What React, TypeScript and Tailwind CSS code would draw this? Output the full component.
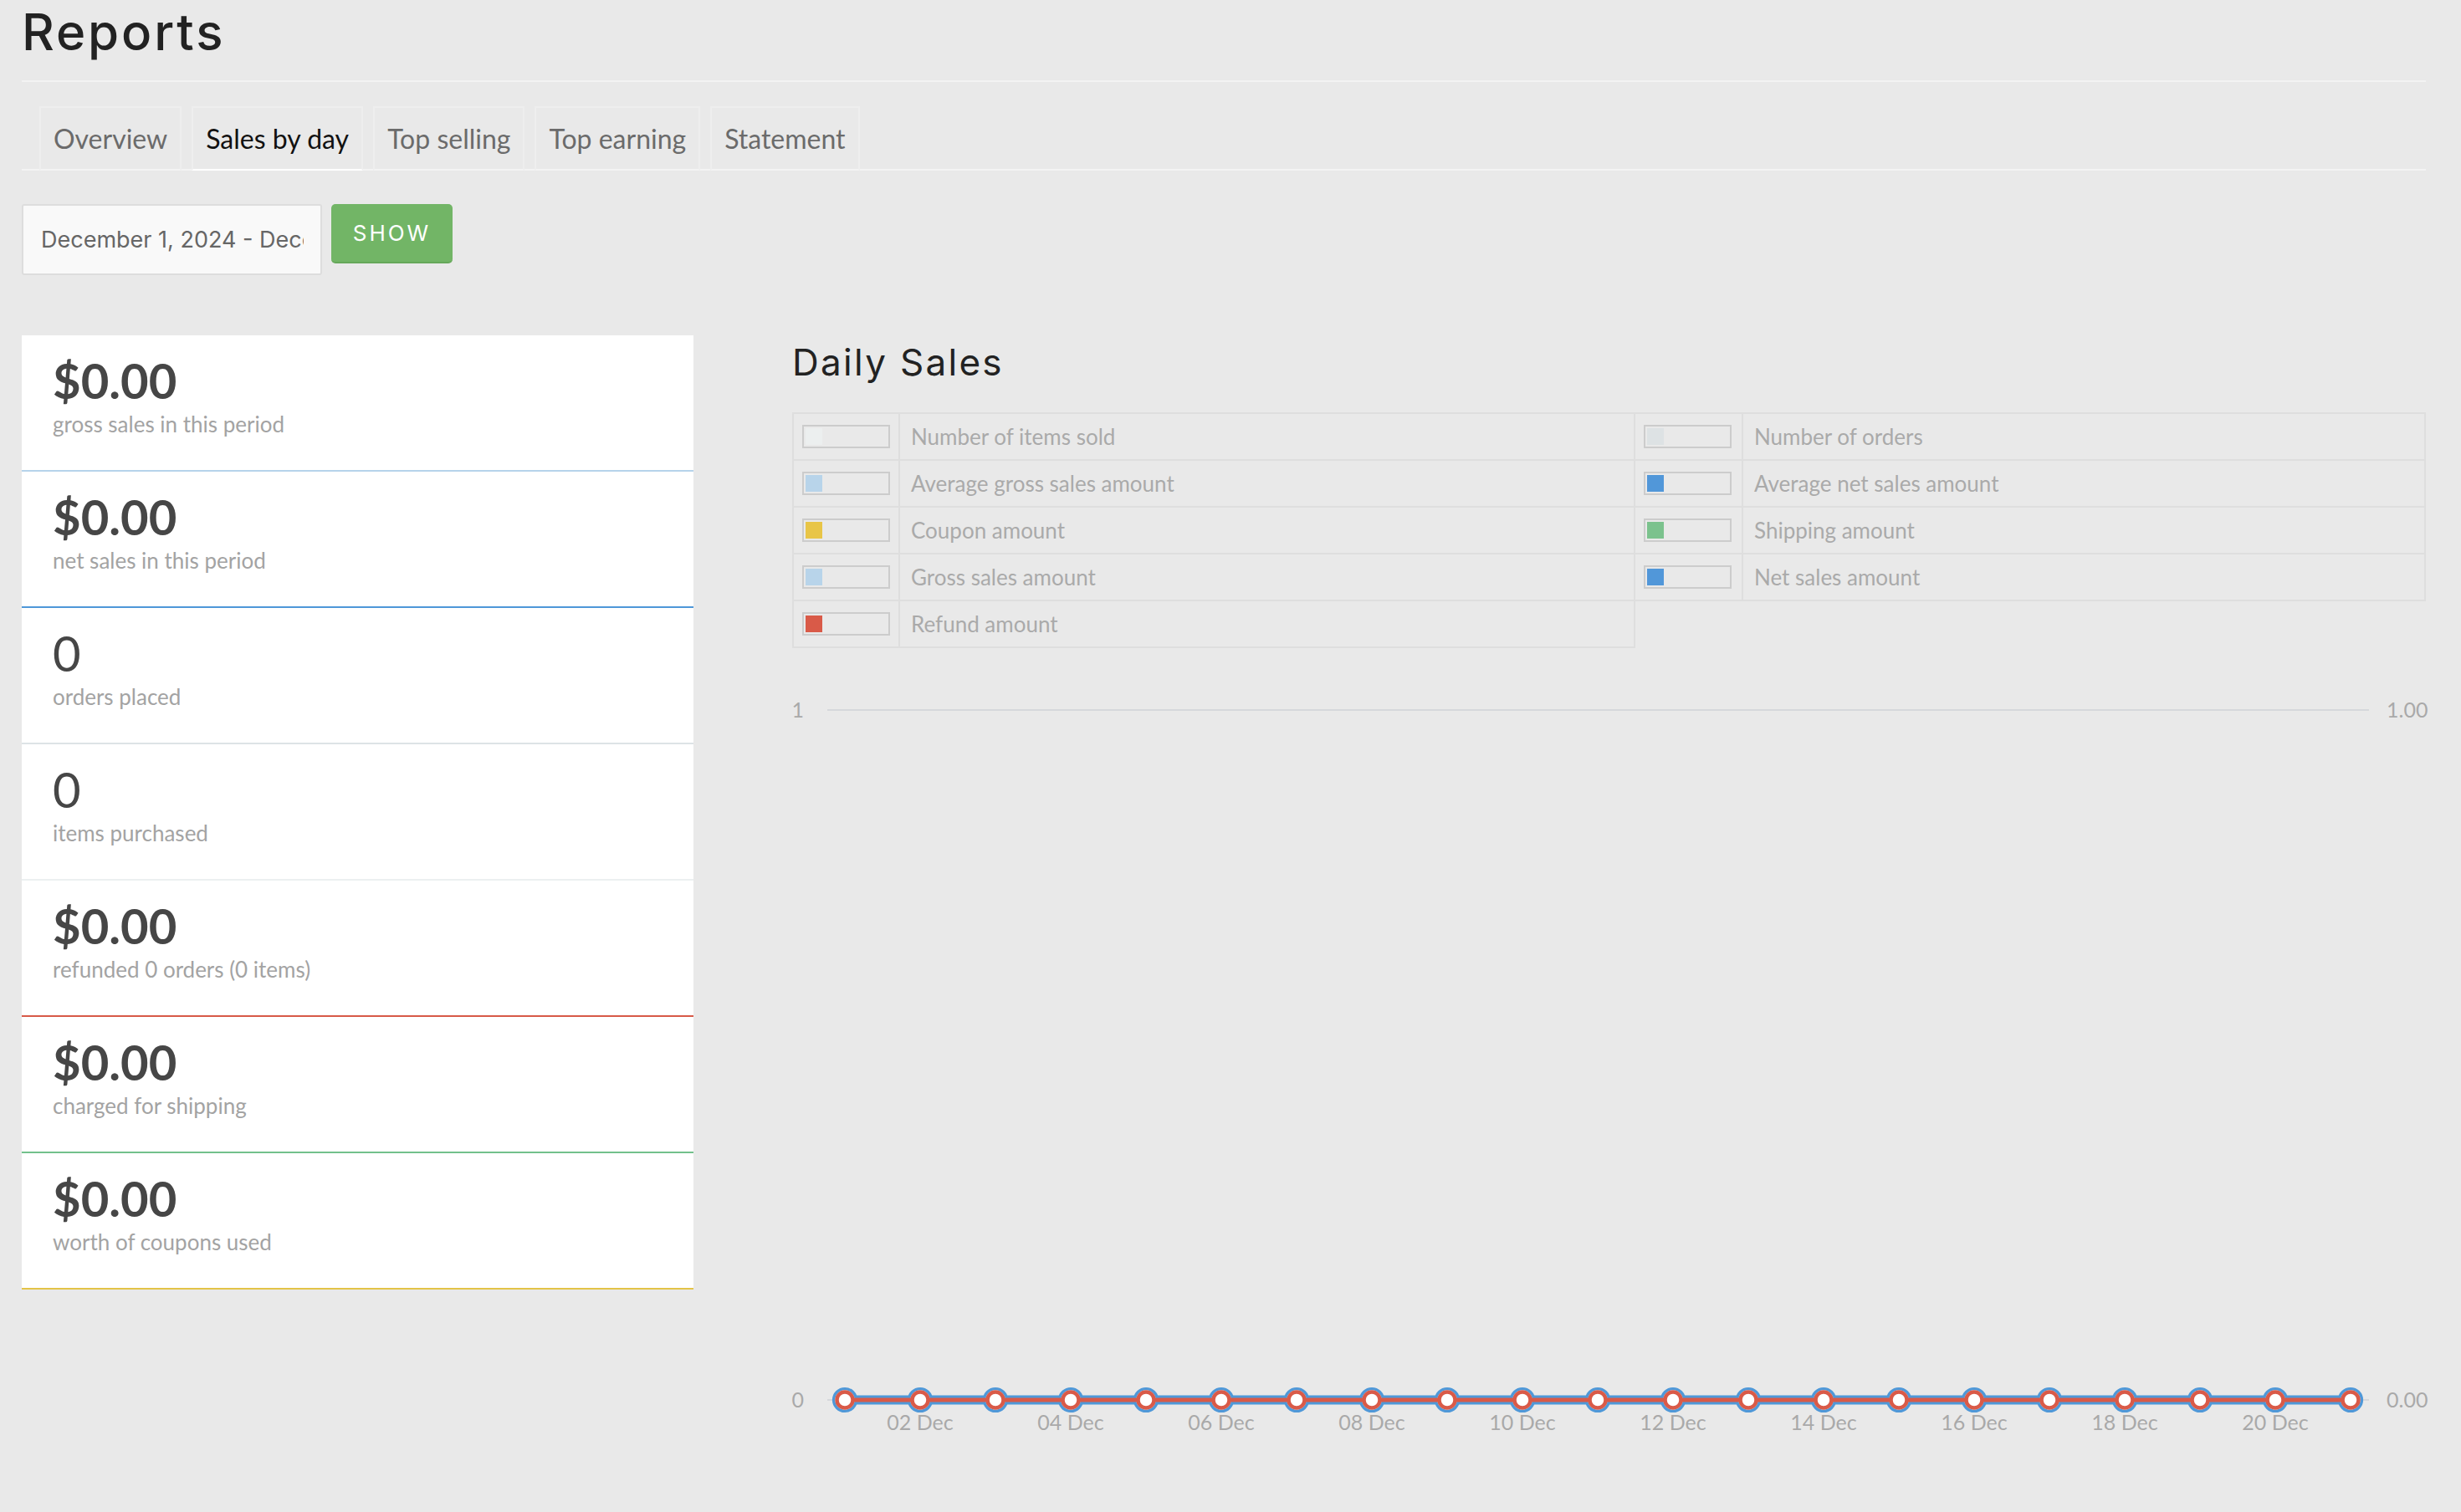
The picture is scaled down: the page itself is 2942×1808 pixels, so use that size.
import React from "react";

const cards = [
  { v: "$0.00", bold: true, label: "gross sales in this period", border: "border-[#b6d3ea]" },
  { v: "$0.00", bold: true, label: "net sales in this period", border: "border-[#4e97d8]" },
  { v: "0", bold: false, label: "orders placed", border: "border-[#dde3e6]" },
  { v: "0", bold: false, label: "items purchased", border: "border-[#ecf0f1]" },
  { v: "$0.00", bold: true, label: "refunded 0 orders (0 items)", border: "border-[#d75948]" },
  { v: "$0.00", bold: true, label: "charged for shipping", border: "border-[#72c18b]" },
  { v: "$0.00", bold: true, label: "worth of coupons used", border: "border-[#e3c348]" },
];

type L = { c: string; t: string };
const legendRows: L[][] = [
  [
    { c: "bg-[#ecefef]", t: "Number of items sold" },
    { c: "bg-[#dde2e4]", t: "Number of orders" },
  ],
  [
    { c: "bg-[#b8d4ea]", t: "Average gross sales amount" },
    { c: "bg-[#5197d9]", t: "Average net sales amount" },
  ],
  [
    { c: "bg-[#e8c547]", t: "Coupon amount" },
    { c: "bg-[#7bc28d]", t: "Shipping amount" },
  ],
  [
    { c: "bg-[#b8d4ea]", t: "Gross sales amount" },
    { c: "bg-[#5197d9]", t: "Net sales amount" },
  ],
  [{ c: "bg-[#d95a48]", t: "Refund amount" }],
];

const tabs = ["Overview", "Sales by day", "Top selling", "Top earning", "Statement"];

function Swatch({ c }: { c: string }) {
  return (
    <div className="w-[105px] h-[28px] border-2 border-[#cccccc] p-[2px]">
      <div className={`w-[20px] h-full ${c}`} />
    </div>
  );
}

function Chart() {
  const pts = Array.from({ length: 21 }, (_, i) => 63 + 90 * i);
  const zeroY = 883;
  const blue = "#4f98d8";
  const red = "#d95a48";
  return (
    <svg width={1953} height={950} viewBox="0 0 1953 950" className="block overflow-visible">
      <g fontFamily="Lato, sans-serif" fontSize={25} fill="#a9a9a9">
        <text x={14} y={67} textAnchor="end">1</text>
        <text x={14} y={892} textAnchor="end">0</text>
        <text x={1906} y={67}>1.00</text>
        <text x={1906} y={892}>0.00</text>
        {pts.map((x, i) =>
          i % 2 === 1 ? (
            <text key={i} x={x} y={919} textAnchor="middle">
              {String(i + 1).padStart(2, "0")} Dec
            </text>
          ) : null
        )}
      </g>
      <line x1={42} y1={58} x2={1885} y2={58} stroke="#d6d8db" strokeWidth={2} />
      <line x1={42} y1={zeroY} x2={1885} y2={zeroY} stroke="#d6d8db" strokeWidth={2} />
      <line x1={63} y1={zeroY} x2={1863} y2={zeroY} stroke={blue} strokeWidth={11} />
      {pts.map((x) => (
        <circle key={"b" + x} cx={x} cy={zeroY} r={13.4} fill="#fff" stroke={blue} strokeWidth={3.4} />
      ))}
      <line x1={63} y1={zeroY} x2={1863} y2={zeroY} stroke={red} strokeWidth={5} />
      {pts.map((x) => (
        <circle key={"r" + x} cx={x} cy={zeroY} r={9.5} fill="#fff" stroke={red} strokeWidth={4.5} />
      ))}
    </svg>
  );
}

export default function App() {
  return (
    <div className="min-h-[1808px] w-full bg-[#e9e9e9] font-['Lato',sans-serif] pl-[26px] pr-[42px]">
      {/* Header */}
      <div className="h-[98px] border-b-2 border-[#f3f3f3]">
        <h1 className="font-['Inter',sans-serif] text-[60px] leading-[72px] font-medium tracking-[2.9px] text-[#222222] pt-[2px]">
          Reports
        </h1>
      </div>

      {/* Tabs */}
      <div className="mt-[29px] flex gap-[12px] pl-[21px] border-b-2 border-[#f3f3f3]">
        {tabs.map((t) => {
          const active = t === "Sales by day";
          return (
            <div
              key={t}
              className={`h-[77px] -mb-[2px] px-[15px] border-2 flex items-center text-[32px] ${
                active
                  ? "border-[#eeeeee] border-b-white text-[#111111]"
                  : "border-[#eeeeee] border-b-transparent text-[#6b6b6b]"
              }`}
            >
              {t}
            </div>
          );
        })}
      </div>

      {/* Date row */}
      <div className="mt-[40px] flex items-start gap-[11px]">
        <input
          readOnly
          value="December 1, 2024 - December 21, 2024"
          className="w-[359px] h-[85px] bg-[#f9f9f9] border-2 border-[#dddddd] rounded-[3px] pl-[21px] pr-[20px] font-['Inter',sans-serif] text-[27px] text-[#666666] outline-none"
        />
        <button className="w-[145px] h-[71px] rounded-[5px] bg-[#72b566] border-b-2 border-[#66a85a] font-['Inter',sans-serif] text-[26px] tracking-[3px] text-white">
          SHOW
        </button>
      </div>

      {/* Main */}
      <div className="mt-[72px] flex gap-[118px] items-start">
        <div className="w-[803px] shrink-0 bg-white">
          {cards.map((c, i) => (
            <div key={i} className={`h-[163px] border-b-2 ${c.border} pl-[37px] pt-[25px]`}>
              <div
                className={`text-[58px] leading-[58px] text-[#464646] ${c.bold ? "font-bold" : "font-normal"}`}
              >
                {c.v}
              </div>
              <div className="mt-[6px] text-[26px] leading-[34px] text-[#a3a3a3]">{c.label}</div>
            </div>
          ))}
        </div>

        <div className="w-[1953px] shrink-0">
          <h2 className="mt-[4px] h-[56px] font-['Inter',sans-serif] text-[44px] leading-[56px] tracking-[2.3px] text-[#222222] font-normal">
            Daily Sales
          </h2>
          <table className="mt-[32px] w-[1953px] table-fixed border-collapse">
            <colgroup>
              <col className="w-[127px]" />
              <col className="w-[879px]" />
              <col className="w-[129px]" />
              <col />
            </colgroup>
            <tbody>
              {legendRows.map((row, ri) => (
                <tr key={ri} className="h-[56px]">
                  {row.map((cell, ci) => (
                    <React.Fragment key={ci}>
                      <td className="border-2 border-[#dedede] pl-[10px] align-middle">
                        <Swatch c={cell.c} />
                      </td>
                      <td className="border-2 border-[#dedede] pl-[13px] text-[26px] text-[#aaaaaa] align-middle">
                        {cell.t}
                      </td>
                    </React.Fragment>
                  ))}
                </tr>
              ))}
            </tbody>
          </table>
          <div className="mt-[16px]">
            <Chart />
          </div>
        </div>
      </div>
    </div>
  );
}
